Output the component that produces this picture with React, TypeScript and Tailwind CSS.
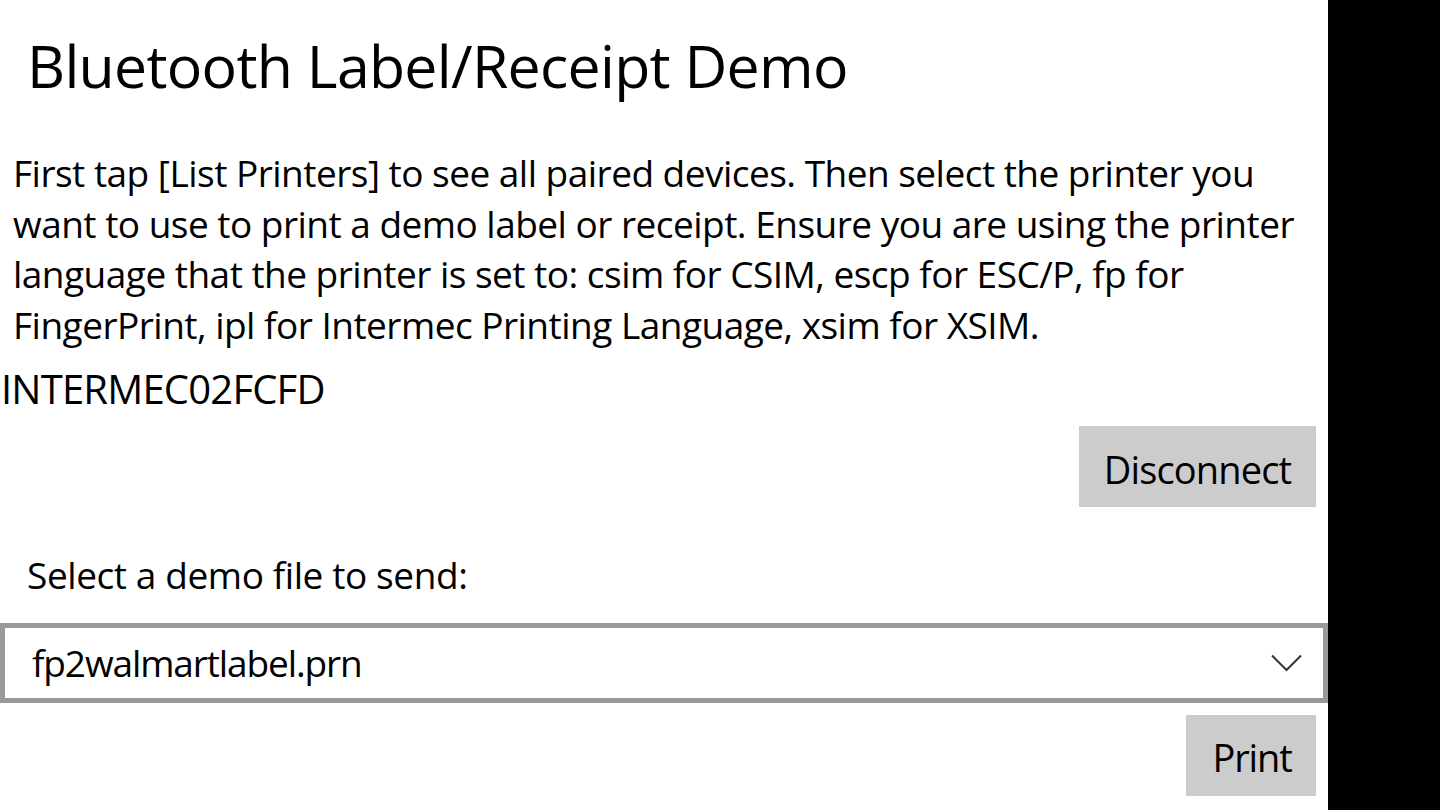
const lines = [
  'First tap [List Printers] to see all paired devices. Then select the printer you',
  'want to use to print a demo label or receipt. Ensure you are using the printer',
  'language that the printer is set to: csim for CSIM, escp for ESC/P, fp for',
  'FingerPrint, ipl for Intermec Printing Language, xsim for XSIM.',
]

const Chevron = () => (
  <svg width="31" height="18" viewBox="0 0 31 18" fill="none" className="text-[#333]">
    <polyline points="1,1.5 15.5,16 30,1.5" stroke="currentColor" strokeWidth="2" />
  </svg>
)

const App = () => {
  return (
    <div className="flex h-[810px] w-[1440px] overflow-hidden font-['Open_Sans',sans-serif] text-black">
      <main className="flex w-[1328px] flex-col bg-white">
        <h1 className="mt-[30px] pl-[27px] text-[59px] leading-[70px] font-normal tracking-[-0.012em] whitespace-nowrap">
          Bluetooth Label/Receipt Demo
        </h1>

        <p className="mt-[48px] pl-[13px] text-[37px] leading-[50.7px] tracking-[-0.014em]">
          {lines.map((l) => (
            <span key={l} className="block whitespace-nowrap">
              {l}
            </span>
          ))}
        </p>

        <div className="mt-[13px] pl-[1px] text-[40px] leading-[50px] tracking-[-0.02em]">INTERMEC02FCFD</div>

        <div className="mt-[12px] flex justify-end pr-[12px]">
          <button className="flex h-[81px] w-[237px] items-center justify-center bg-[#cccccc] pt-[5px] text-[38px] leading-[50px] tracking-[-0.022em]">
            Disconnect
          </button>
        </div>

        <div className="mt-[43px] pl-[27px] text-[37px] leading-[50px] tracking-[-0.011em]">Select a demo file to send:</div>

        <div className="mt-[23px] flex h-[80px] items-center justify-between border-[5px] border-[#999999] pr-[21px] pl-[27px]">
          <span className="text-[37px] leading-[50px] tracking-[-0.03em]">fp2walmartlabel.prn</span>
          <Chevron />
        </div>

        <div className="mt-[12px] flex justify-end pr-[12px]">
          <button className="flex h-[81px] w-[130px] items-center justify-center bg-[#cccccc] pt-[4px] pl-[2px] text-[38px] leading-[50px] tracking-[-0.03em]">
            Print
          </button>
        </div>
      </main>
      <aside className="w-[112px] bg-black" />
    </div>
  )
}

export default App
